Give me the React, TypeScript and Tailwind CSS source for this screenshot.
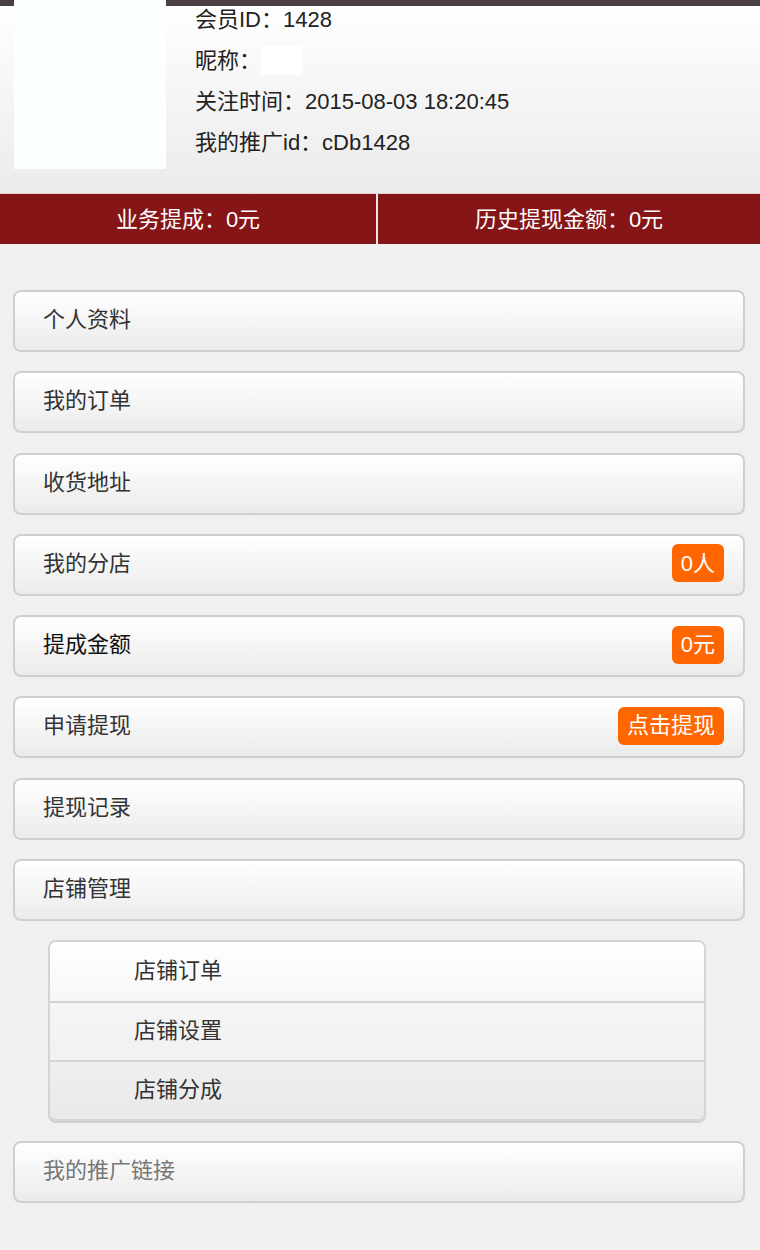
const menu = [
  { label: '个人资料' },
  { label: '我的订单' },
  { label: '收货地址' },
  { label: '我的分店', badge: '0人' },
  { label: '提成金额', badge: '0元', dark: true },
  { label: '申请提现', badge: '点击提现' },
  { label: '提现记录' },
  { label: '店铺管理' },
]

const shopMenu = [
  { label: '店铺订单', bg: 'bg-gradient-to-b from-white to-[#f7f7f7]' },
  { label: '店铺设置', bg: 'bg-gradient-to-b from-[#f5f5f5] to-[#f1f1f1]' },
  { label: '店铺分成', bg: 'bg-gradient-to-b from-[#efefef] to-[#e9e9e9]' },
]

function MenuItem({ label, badge, dark, muted }: { label: string; badge?: string; dark?: boolean; muted?: boolean }) {
  return (
    <div className="flex items-center justify-between h-[62px] pl-[28px] pr-[19px] pb-[3px] rounded-[8px] border-2 border-[#cfcfcf] bg-gradient-to-b from-white to-[#ebebeb]">
      <span className={muted ? 'text-[#777]' : dark ? 'text-[#111]' : 'text-[#333]'}>{label}</span>
      {badge && (
        <span className="h-[38px] px-[9px] flex items-center rounded-[6px] bg-[#ff6600] text-white">{badge}</span>
      )}
    </div>
  )
}

export default function App() {
  return (
    <div className="min-h-[1250px] bg-[#f0f0f0] text-[22px] font-['Liberation_Sans','Noto_Sans_CJK_SC',sans-serif]">
      <header className="relative bg-gradient-to-b from-white to-[#e6e6e6]">
        <div className="absolute top-0 left-0 right-0 h-[6px] bg-[#4a3f42]" />
        <div className="flex h-[193px]">
          <div className="relative ml-[14px] w-[152px] h-[169px] bg-[#fbfffe]" />
          <div className="flex flex-col pl-[29px] -mt-[1px] text-[#222] leading-[41px]">
            <div>会员ID：1428</div>
            <div className="flex items-center">
              昵称：<span className="inline-block w-[41px] h-[29px] bg-white" />
            </div>
            <div>关注时间：2015-08-03 18:20:45</div>
            <div>我的推广id：cDb1428</div>
          </div>
        </div>
        <div className="flex h-[51px] bg-[#851517] border-t border-[#e8d0d0] text-white">
          <div className="w-[378px] flex items-center justify-center border-r-2 border-[#f3e6e6]">业务提成：0元</div>
          <div className="flex-1 flex items-center justify-center">历史提现金额：0元</div>
        </div>
      </header>

      <div className="flex flex-col gap-[19.3px] pl-[13px] pr-[15px] pt-[46px] pb-[40px]">
        {menu.map((m) => (
          <MenuItem key={m.label} {...m} />
        ))}

        <div className="ml-[35px] mr-[39px] rounded-[8px] border-2 border-[#d4d4d4] shadow-[0_2px_0_#cfcfcf] overflow-hidden">
          {shopMenu.map((s, i) => (
            <div
              key={s.label}
              className={`h-[59px] flex items-center pl-[84px] pb-[2px] text-[#333] ${s.bg} ${i > 0 ? 'border-t-2 border-[#d4d4d4]' : ''}`}
            >
              {s.label}
            </div>
          ))}
        </div>

        <MenuItem label="我的推广链接" muted />
      </div>
    </div>
  )
}
